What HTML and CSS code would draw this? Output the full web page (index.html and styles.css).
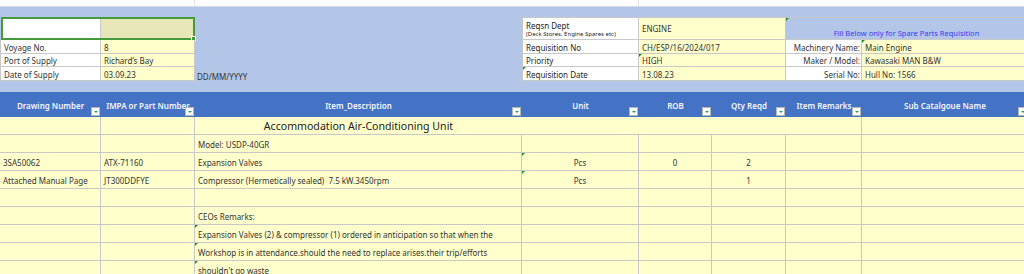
FILE: index.html
```html
<!DOCTYPE html>
<html lang="en">
<head>
<meta charset="utf-8">
<title>Requisition</title>
<link rel="stylesheet" href="styles.css">
</head>
<body>
<div class="sheet">
  <div class="strip"><div></div><div></div><div class="last"></div></div>

  <div class="panel">
    <div class="sel"><div class="sel-a"></div><div class="sel-b"></div></div>
    <div class="gap"></div>
    <div class="cell lbl rl top dept"><span class="dept-t">Reqsn Dept</span><span class="dept-s">(Deck Stores, Engine Spares etc)</span></div>
    <div class="cell val span2 top mid">ENGINE</div>
    <div class="cell fill top m">Fill Below only for Spare Parts Requisition</div>

    <div class="cell lbl fl">Voyage No.</div>
    <div class="cell val">8</div>
    <div class="gap"></div>
    <div class="cell lbl rl">Requisition No</div>
    <div class="cell val span2">CH/ESP/16/2024/017</div>
    <div class="cell lbl rt">Machinery Name:</div>
    <div class="cell val m">Main Engine</div>

    <div class="cell lbl fl">Port of Supply</div>
    <div class="cell val">Richard’s Bay</div>
    <div class="gap"></div>
    <div class="cell lbl rl">Priority</div>
    <div class="cell val span2 m">HIGH</div>
    <div class="cell lbl rt">Maker / Model:</div>
    <div class="cell val">Kawasaki MAN B&amp;W</div>

    <div class="cell lbl fl">Date of Supply</div>
    <div class="cell val">03.09.23</div>
    <div class="note">DD/MM/YYYY</div>
    <div class="cell lbl rl m">Requisition Date</div>
    <div class="cell val span2">13.08.23</div>
    <div class="cell lbl rt">Serial No:</div>
    <div class="cell val">Hull No: 1566</div>
  </div>

  <div class="head">
    <div class="hc">Drawing Number<span class="dd"></span></div>
    <div class="hc">IMPA or Part Number<span class="dd"></span></div>
    <div class="hc">Item_Description<span class="dd"></span></div>
    <div class="hc">Unit<span class="dd"></span></div>
    <div class="hc">ROB<span class="dd"></span></div>
    <div class="hc">Qty Reqd<span class="dd"></span></div>
    <div class="hc">Item Remarks<span class="dd"></span></div>
    <div class="hc">Sub Catalgoue Name<span class="dd"></span></div>
  </div>

  <div class="row">
    <div></div><div></div>
    <div class="merged"><span class="title">Accommodation Air-Conditioning Unit</span></div>
    <div></div>
  </div>
  <div class="row">
    <div></div><div></div><div>Model: USDP-40GR</div><div></div><div></div><div></div><div></div><div></div>
  </div>
  <div class="row">
    <div>3SA50062</div><div>ATX-71160</div><div>Expansion Valves</div><div class="ctr m">Pcs</div><div class="ctr">0</div><div class="ctr">2</div><div></div><div></div>
  </div>
  <div class="row">
    <div>Attached Manual Page</div><div>JT300DDFYE</div><div>Compressor (Hermetically sealed)&nbsp; 7.5 kW.3450rpm</div><div class="ctr m">Pcs</div><div></div><div class="ctr">1</div><div></div><div></div>
  </div>
  <div class="row">
    <div></div><div></div><div></div><div></div><div></div><div></div><div></div><div></div>
  </div>
  <div class="row">
    <div></div><div></div><div>CEOs Remarks:</div><div></div><div></div><div></div><div></div><div></div>
  </div>
  <div class="row">
    <div></div><div></div><div class="m">Expansion Valves (2) &amp; compressor (1) ordered in anticipation so that when the</div><div></div><div></div><div></div><div></div><div></div>
  </div>
  <div class="row">
    <div></div><div></div><div class="m">Workshop is in attendance.should the need to replace arises.their trip/efforts</div><div></div><div></div><div></div><div></div><div></div>
  </div>
  <div class="row">
    <div></div><div></div><div class="m">shouldn't go waste</div><div></div><div></div><div></div><div></div><div></div>
  </div>
</div>
</body>
</html>
```

FILE: styles.css
```css
:root {
  --cols: 101px 94px 327px 117px 73px 74px 76px 166px;
  --grid: #c8c8c8;
}

html, body {
  margin: 0;
  overflow: hidden;
  background: #fff;
}

body {
  font-family: "Noto Sans", "Liberation Sans", Arial, sans-serif;
  font-size: 8px;
  color: #333;
}

.sheet {
  width: 1028px;
}

/* top white strip */
.strip {
  display: grid;
  grid-template-columns: 195px 444px 1fr;
  height: 6px;
  border-bottom: 1px solid #d6dbe4;
}
.strip div {
  border-right: 1px solid #e2e2e2;
}
.strip .last {
  border-right: 0;
}

/* blue info panel */
.panel {
  background: #b4c6e7;
  height: 85px;
  box-sizing: border-box;
  padding-top: 10px;
  display: grid;
  grid-template-columns: var(--cols);
  grid-template-rows: 23px 14px 13px 14px;
  align-content: start;
}

.cell {
  box-sizing: border-box;
  border-right: 1px solid var(--grid);
  border-bottom: 1px solid var(--grid);
  display: flex;
  align-items: flex-end;
  padding: 0 3px 0;
  line-height: 10px;
  white-space: nowrap;
  position: relative;
  overflow: visible;
}

.lbl { background: #fff; }
.val { background: #ffffcc; }
.fl { border-left: 1px solid var(--grid); }
.rl { border-left: 1px solid var(--grid); color: #1e1e1e; }
.rt { justify-content: flex-end; padding-right: 1px; }
.top { border-top: 1px solid var(--grid); }
.mid { align-items: center; padding-top: 1px; }
.span2 { grid-column: span 2; }

.dept {
  flex-direction: column;
  align-items: flex-start;
  justify-content: center;
  padding-top: 2px;
}
.dept-t { line-height: 9px; }
.dept-s { font-size: 6px; line-height: 8px; }

.fill {
  grid-column: span 2;
  justify-content: center;
  color: #3a3af2;
  font-size: 7.5px;
  padding-bottom: 1px;
}

.sel {
  grid-column: 1 / 3;
  margin-left: 1px;
  border: 2px solid #459a3b;
  display: grid;
  grid-template-columns: 98px 1fr;
  position: relative;
}
.sel-a {
  background: #fff;
  border-right: 1px solid var(--grid);
}
.sel-b {
  background: #e6e6b9;
}
.sel::after {
  content: "";
  position: absolute;
  right: -3px;
  bottom: -3px;
  width: 3px;
  height: 3px;
  background: #459a3b;
  border: 1px solid #fff;
}

.note {
  display: flex;
  align-items: flex-end;
  padding: 0 0 0 2px;
  line-height: 8px;
  color: #333;
}

/* green comment markers */
.m::before {
  content: "";
  position: absolute;
  top: 0;
  left: 0;
  border-top: 3px solid #1f8f2a;
  border-right: 3px solid transparent;
}

/* header row */
.head {
  display: grid;
  grid-template-columns: var(--cols);
  grid-template-rows: 25px;
  background: #4472c4;
  color: #f4f7ff;
  font-weight: 600;
}
.hc {
  position: relative;
  text-align: center;
  padding-top: 2px;
  line-height: 23px;
  white-space: nowrap;
  font-size: 8px;
}
.dd {
  position: absolute;
  right: 1px;
  bottom: 1px;
  width: 9px;
  height: 9px;
  box-sizing: border-box;
  background: #fff;
  border: 1px solid #b5b5b5;
}
.dd::after {
  content: "";
  position: absolute;
  left: 2px;
  top: 3px;
  border-left: 2px solid transparent;
  border-right: 2px solid transparent;
  border-top: 2px solid #20a070;
}

/* data rows */
.row {
  display: grid;
  grid-template-columns: var(--cols);
  grid-template-rows: 18px;
}
.row > div {
  box-sizing: border-box;
  border-right: 1px solid var(--grid);
  border-bottom: 1px solid var(--grid);
  background: #ffffcc;
  padding: 2px 3px 0;
  line-height: 15px;
  white-space: nowrap;
  position: relative;
}
.row > .ctr {
  text-align: center;
}
.row > .merged {
  grid-column: 3 / 8;
  padding: 1px 0 0;
}
.title {
  display: block;
  width: 327px;
  text-align: center;
  font-size: 10.6px;
  line-height: 16px;
  color: #222;
}
```
